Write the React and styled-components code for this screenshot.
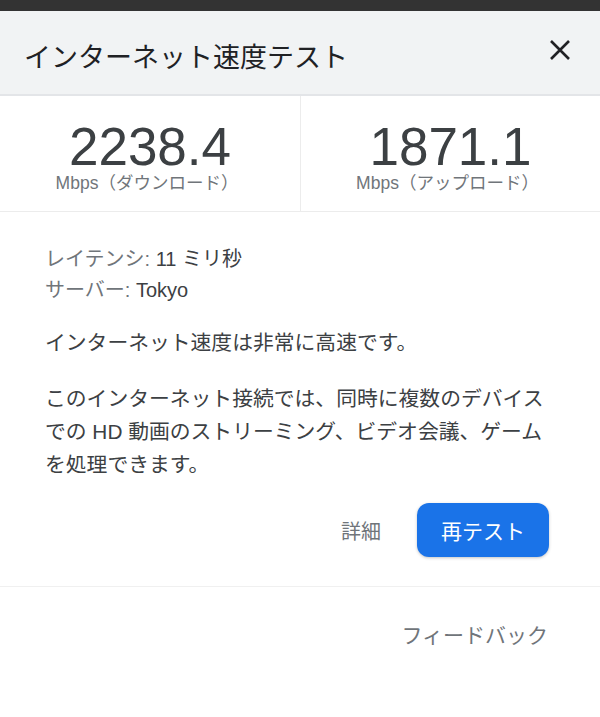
import React from 'react';
import styled, { createGlobalStyle } from 'styled-components';

const GlobalStyle = createGlobalStyle`
    body {
        margin: 0;
        background: #ffffff;
        font-family: "Liberation Sans", Arial, "Noto Sans CJK JP", sans-serif;
    }
`

const Page = styled.div`
    width: 600px;
    min-height: 717px;
    background: #ffffff;
`

const TopBar = styled.div`
    height: 11px;
    background: #333333;
`

const Header = styled.div`
    height: 83px;
    background: #f1f3f4;
    border-bottom: 2px solid #e3e5e8;
    display: flex;
    align-items: center;
    justify-content: space-between;
    padding: 0 28px 0 24px;
`

const Title = styled.h1`
    margin: 0;
    font-size: 27px;
    font-weight: 400;
    color: #202124;
    padding-top: 6px;
`

const CloseButton = styled.button`
    border: none;
    background: none;
    padding: 0;
    width: 24px;
    height: 24px;
    display: flex;
    align-items: center;
    justify-content: center;
    cursor: pointer;
    margin-top: -6px;
`

const Stats = styled.div`
    display: grid;
    grid-template-columns: 1fr 1fr;
    border-bottom: 1px solid #ececec;
`

const Stat = styled.div`
    height: 115px;
    display: flex;
    flex-direction: column;
    align-items: center;
    border-left: ${p => (p.divider ? '1px solid #ececec' : 'none')};
`

const Value = styled.div`
    font-size: 53px;
    line-height: 50px;
    color: #3c4043;
    margin-top: 26px;
`

const Unit = styled.div`
    font-size: 17.5px;
    line-height: 20px;
    color: #70757a;
    margin-top: 1px;
    margin-left: -6px;
`

const Body = styled.div`
    padding: 32px 50px 0 45px;
    color: #3c4043;
`

const Info = styled.div`
    font-size: 20px;
    line-height: 31px;
`

const Label = styled.span`
    color: #70757a;
`

const Text = styled.p`
    margin: ${p => p.gap}px 0 0;
    font-size: 20.8px;
    line-height: 33px;
`

const Actions = styled.div`
    display: flex;
    justify-content: flex-end;
    align-items: center;
    gap: 36px;
    padding: 22px 51px 29px 0;
    border-bottom: 1px solid #f0f0f0;
`

const TextButton = styled.button`
    border: none;
    background: none;
    padding: 0;
    font-family: inherit;
    font-size: ${p => p.size || 20}px;
    color: #70757a;
    cursor: pointer;
`

const PrimaryButton = styled.button`
    border: none;
    width: 132px;
    height: 54px;
    border-radius: 12px;
    background: #1a73e8;
    color: #ffffff;
    font-family: inherit;
    font-size: 21px;
    box-shadow: 0 1px 3px rgba(60, 64, 67, 0.3);
    cursor: pointer;
`

const Footer = styled.div`
    display: flex;
    justify-content: flex-end;
    padding: 32px 52px 0 0;
`

export default function App() {
    return (
        <Page>
            <GlobalStyle />
            <TopBar />
            <Header>
                <Title>インターネット速度テスト</Title>
                <CloseButton aria-label="閉じる">
                    <svg width="22" height="22" viewBox="0 0 22 22">
                        <path d="M2 2 L20 20 M20 2 L2 20" stroke="#202124" strokeWidth="2.6" />
                    </svg>
                </CloseButton>
            </Header>
            <Stats>
                <Stat>
                    <Value>2238.4</Value>
                    <Unit>Mbps（ダウンロード）</Unit>
                </Stat>
                <Stat divider>
                    <Value>1871.1</Value>
                    <Unit>Mbps（アップロード）</Unit>
                </Stat>
            </Stats>
            <Body>
                <Info><Label>レイテンシ:</Label> 11 ミリ秒</Info>
                <Info><Label>サーバー:</Label> Tokyo</Info>
                <Text gap={20}>インターネット速度は非常に高速です。</Text>
                <Text gap={23}>このインターネット接続では、同時に複数のデバイスでの HD 動画のストリーミング、ビデオ会議、ゲームを処理できます。</Text>
            </Body>
            <Actions>
                <TextButton>詳細</TextButton>
                <PrimaryButton>再テスト</PrimaryButton>
            </Actions>
            <Footer>
                <TextButton size={21}>フィードバック</TextButton>
            </Footer>
        </Page>
    );
}
